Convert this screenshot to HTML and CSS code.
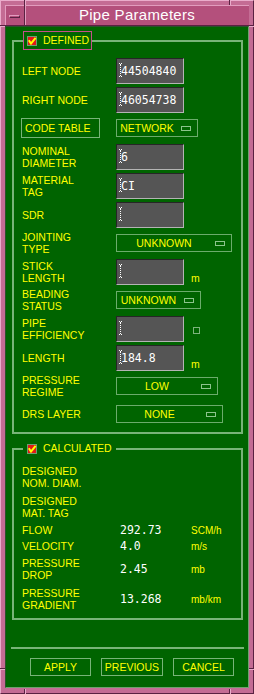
FILE: index.html
```html
<!DOCTYPE html>
<html lang="en">

<head>
    <meta charset="UTF-8">
    <meta name="viewport" content="width=device-width, initial-scale=1.0">
    <title>Pipe Parameters</title>
    <link rel="stylesheet" href="styles.css">
</head>

<body>

    <div class="window">
        <!-- resize corner marks on the frame -->
        <span class="tick tick-v tick-top-left"></span>
        <span class="tick tick-v tick-top-right"></span>
        <span class="tick tick-v tick-bottom-left"></span>
        <span class="tick tick-v tick-bottom-right"></span>
        <span class="tick tick-h tick-left-top"></span>
        <span class="tick tick-h tick-left-bottom"></span>
        <span class="tick tick-h tick-right-top"></span>
        <span class="tick tick-h tick-right-bottom"></span>

        <div class="titlebar">
            <div class="menu-btn"><span class="menu-dash"></span></div>
            <div class="title">Pipe Parameters</div>
        </div>

        <div class="client">

            <fieldset class="group">
                <legend class="legend legend-focus">
                    <svg class="check" width="10" height="10" viewBox="0 0 10 10">
                        <rect x="0.5" y="0.5" width="9" height="9" fill="#e01818" stroke="#6f9f6f" />
                        <path d="M1.8 4.3 L4 7.6 L8.6 1.8" fill="none" stroke="#ffff00" stroke-width="2" />
                    </svg>
                    <span>DEFINED</span>
                </legend>

                <div class="row">
                    <div class="label">LEFT NODE</div>
                    <div class="field"><span class="caret"></span>44504840</div>
                </div>
                <div class="row">
                    <div class="label">RIGHT NODE</div>
                    <div class="field"><span class="caret"></span>46054738</div>
                </div>
                <div class="row row-opt">
                    <div class="label"><span class="label-box">CODE TABLE</span></div>
                    <div class="option option-network">
                        <span class="option-text">NETWORK</span><span class="option-ind"></span>
                    </div>
                </div>
                <div class="row">
                    <div class="label">NOMINAL<br>DIAMETER</div>
                    <div class="field"><span class="caret"></span>6</div>
                </div>
                <div class="row">
                    <div class="label">MATERIAL<br>TAG</div>
                    <div class="field"><span class="caret"></span>CI</div>
                </div>
                <div class="row">
                    <div class="label">SDR</div>
                    <div class="field"><span class="caret"></span></div>
                </div>
                <div class="row row-opt">
                    <div class="label">JOINTING<br>TYPE</div>
                    <div class="option option-jointing">
                        <span class="option-text">UNKNOWN</span><span class="option-ind"></span>
                    </div>
                </div>
                <div class="row">
                    <div class="label">STICK<br>LENGTH</div>
                    <div class="field"><span class="caret"></span></div>
                    <div class="unit unit-low">m</div>
                </div>
                <div class="row row-opt">
                    <div class="label">BEADING<br>STATUS</div>
                    <div class="option option-beading">
                        <span class="option-text">UNKNOWN</span><span class="option-ind"></span>
                    </div>
                </div>
                <div class="row">
                    <div class="label">PIPE<br>EFFICIENCY</div>
                    <div class="field"><span class="caret"></span></div>
                    <div class="mini-box"></div>
                </div>
                <div class="row">
                    <div class="label">LENGTH</div>
                    <div class="field"><span class="caret"></span>184.8</div>
                    <div class="unit unit-low">m</div>
                </div>
                <div class="row row-opt">
                    <div class="label">PRESSURE<br>REGIME</div>
                    <div class="option option-low">
                        <span class="option-text">LOW</span><span class="option-ind"></span>
                    </div>
                </div>
                <div class="row row-opt">
                    <div class="label">DRS LAYER</div>
                    <div class="option option-none">
                        <span class="option-text">NONE</span><span class="option-ind"></span>
                    </div>
                </div>
            </fieldset>

            <fieldset class="group group-calc">
                <legend class="legend">
                    <svg class="check" width="10" height="10" viewBox="0 0 10 10">
                        <rect x="0.5" y="0.5" width="9" height="9" fill="#e01818" stroke="#6f9f6f" />
                        <path d="M1.8 4.3 L4 7.6 L8.6 1.8" fill="none" stroke="#ffff00" stroke-width="2" />
                    </svg>
                    <span>CALCULATED</span>
                </legend>

                <div class="crow crow-tall">
                    <div class="clabel">DESIGNED<br>NOM. DIAM.</div>
                </div>
                <div class="crow crow-tall">
                    <div class="clabel">DESIGNED<br>MAT. TAG</div>
                </div>
                <div class="crow">
                    <div class="clabel">FLOW</div>
                    <div class="value">292.73</div>
                    <div class="cunit">SCM/h</div>
                </div>
                <div class="crow">
                    <div class="clabel">VELOCITY</div>
                    <div class="value">4.0</div>
                    <div class="cunit">m/s</div>
                </div>
                <div class="crow crow-tall">
                    <div class="clabel">PRESSURE<br>DROP</div>
                    <div class="value">2.45</div>
                    <div class="cunit">mb</div>
                </div>
                <div class="crow crow-tall">
                    <div class="clabel">PRESSURE<br>GRADIENT</div>
                    <div class="value">13.268</div>
                    <div class="cunit">mb/km</div>
                </div>
            </fieldset>

            <div class="sep"></div>

            <div class="buttons">
                <div class="btn btn-apply">APPLY</div>
                <div class="btn btn-previous">PREVIOUS</div>
                <div class="btn btn-cancel">CANCEL</div>
            </div>

        </div>
    </div>

</body>

</html>
```

FILE: styles.css
```css
/* Global Styles */
body {
    margin: 0;
    padding: 0;
    background-color: #c46c94;
    font-family: 'Liberation Sans', Arial, Helvetica, sans-serif;
}

/* Window frame */
.window {
    position: relative;
    width: 254px;
    height: 694px;
    box-sizing: border-box;
    background-color: #c46c94;
    border: 1px solid;
    border-color: #eaaccb #5a2242 #5a2242 #eaaccb;
    padding: 4px 4px 5px 4px;
    display: flex;
    flex-direction: column;
}

.tick {
    position: absolute;
    box-sizing: border-box;
}

.tick-v {
    width: 2px;
    height: 5px;
    border-left: 1px solid #5a2242;
    border-right: 1px solid #eaaccb;
}

.tick-h {
    width: 5px;
    height: 2px;
    border-top: 1px solid #5a2242;
    border-bottom: 1px solid #eaaccb;
}

.tick-top-left { top: -1px; left: 23px; }
.tick-top-right { top: -1px; left: 228px; }
.tick-bottom-left { bottom: -1px; left: 23px; }
.tick-bottom-right { bottom: -1px; left: 228px; }
.tick-left-top { left: -1px; top: 24px; }
.tick-left-bottom { left: -1px; top: 667px; }
.tick-right-top { right: -1px; top: 24px; }
.tick-right-bottom { right: -1px; top: 667px; }

/* Title bar */
.titlebar {
    display: flex;
    height: 20px;
    border-bottom: 1px solid #5a2242;
    background-color: #b4507c;
}

.menu-btn {
    width: 19px;
    border-right: 1px solid #5a2242;
    box-shadow: inset 1px 1px 0 #e29cbe;
    display: flex;
    align-items: center;
    justify-content: center;
}

.menu-dash {
    width: 11px;
    height: 3px;
    box-sizing: border-box;
    border: 1px solid;
    border-color: #e29cbe #5a2242 #5a2242 #e29cbe;
    margin-top: 2px;
}

.title {
    flex: 1;
    text-align: center;
    color: #ffffff;
    font-size: 15px;
    line-height: 20px;
    letter-spacing: 0.3px;
    box-shadow: inset 1px 1px 0 #e29cbe;
}

/* Client area */
.client {
    flex: 1;
    background-color: #006400;
    border: 1px solid;
    border-color: #2e4e2e #6fa06f #6fa06f #2e4e2e;
    padding: 4px 5px 0 6px;
    display: flex;
    flex-direction: column;
    color: #ffff00;
    font-size: 10.5px;
}

/* Group frames */
.group {
    margin: 0;
    padding: 6px 4px 4px 8px;
    min-width: 0;
    border: 2px solid #78b478;
}

.group-calc {
    margin-top: 7px;
}

.legend {
    display: flex;
    align-items: center;
    margin-left: 1px;
    padding: 0 4px;
    height: 15px;
    line-height: 15px;
}

.legend-focus {
    height: 17px;
    padding: 0 2px 0 3px;
    border: 1px solid #c4508a;
}

.check {
    display: block;
    margin-right: 6px;
}

/* Defined rows */
.row {
    display: flex;
    align-items: center;
    height: 29px;
}

.row-opt {
    height: 28px;
}

.label {
    width: 94px;
    flex: none;
    line-height: 12px;
}

.label-box {
    display: flex;
    align-items: center;
    width: 79px;
    height: 20px;
    box-sizing: border-box;
    margin-left: -1px;
    padding-left: 3px;
    border: 1px solid #78b478;
}

.field {
    position: relative;
    width: 68px;
    height: 26px;
    box-sizing: border-box;
    padding-left: 4px;
    background-color: #555555;
    border: 1px solid;
    border-color: #262626 #b4b4b4 #b4b4b4 #262626;
    color: #ffffff;
    font-family: 'DejaVu Sans Mono', 'Liberation Mono', monospace;
    font-size: 11.5px;
    line-height: 24px;
}

/* dotted text cursor */
.caret {
    position: absolute;
    left: 2px;
    top: 4px;
    width: 3px;
    height: 14px;
    box-sizing: border-box;
    border-top: 1px dotted #ffffff;
    border-bottom: 1px dotted #ffffff;
}

.caret::after {
    content: '';
    position: absolute;
    left: 1px;
    top: 0;
    height: 12px;
    border-left: 1px dotted #ffffff;
}

.option {
    display: flex;
    align-items: center;
    height: 18px;
    box-sizing: border-box;
    border: 1px solid #6cac6c;
}

.option-text {
    flex: 1;
    text-align: center;
}

.option-ind {
    width: 10px;
    height: 5px;
    box-sizing: border-box;
    margin: 0 6px 0 4px;
    border: 1px solid #8cc48c;
}

.option-network { width: 82px; }
.option-jointing { width: 116px; }
.option-beading { width: 85px; }
.option-low { width: 102px; }
.option-none { width: 107px; }

.unit {
    margin-left: 7px;
    line-height: 12px;
}

.unit-low {
    align-self: flex-end;
    margin-bottom: 2px;
}

.mini-box {
    width: 7px;
    height: 7px;
    box-sizing: border-box;
    margin: 4px 0 0 9px;
    border: 1px solid #7cb47c;
}

/* Calculated rows */
.crow {
    display: flex;
    align-items: center;
    height: 16px;
}

.crow-tall {
    height: 30px;
}

.clabel {
    width: 98px;
    flex: none;
    line-height: 12px;
}

.value {
    width: 71px;
    flex: none;
    color: #ffffff;
    font-family: 'DejaVu Sans Mono', 'Liberation Mono', monospace;
    font-size: 11.5px;
}

.cunit {
    font-size: 10px;
}

/* Bottom buttons */
.sep {
    margin: 27px -1px 0 -1px;
    border-top: 2px solid #78b478;
}

.buttons {
    display: flex;
    gap: 10px;
    margin-top: 9px;
    padding-left: 18px;
}

.btn {
    display: flex;
    align-items: center;
    justify-content: center;
    height: 18px;
    box-sizing: border-box;
    border: 1px solid #78b478;
}

.btn-apply { width: 61px; }
.btn-previous { width: 62px; }
.btn-cancel { width: 61px; }
```
